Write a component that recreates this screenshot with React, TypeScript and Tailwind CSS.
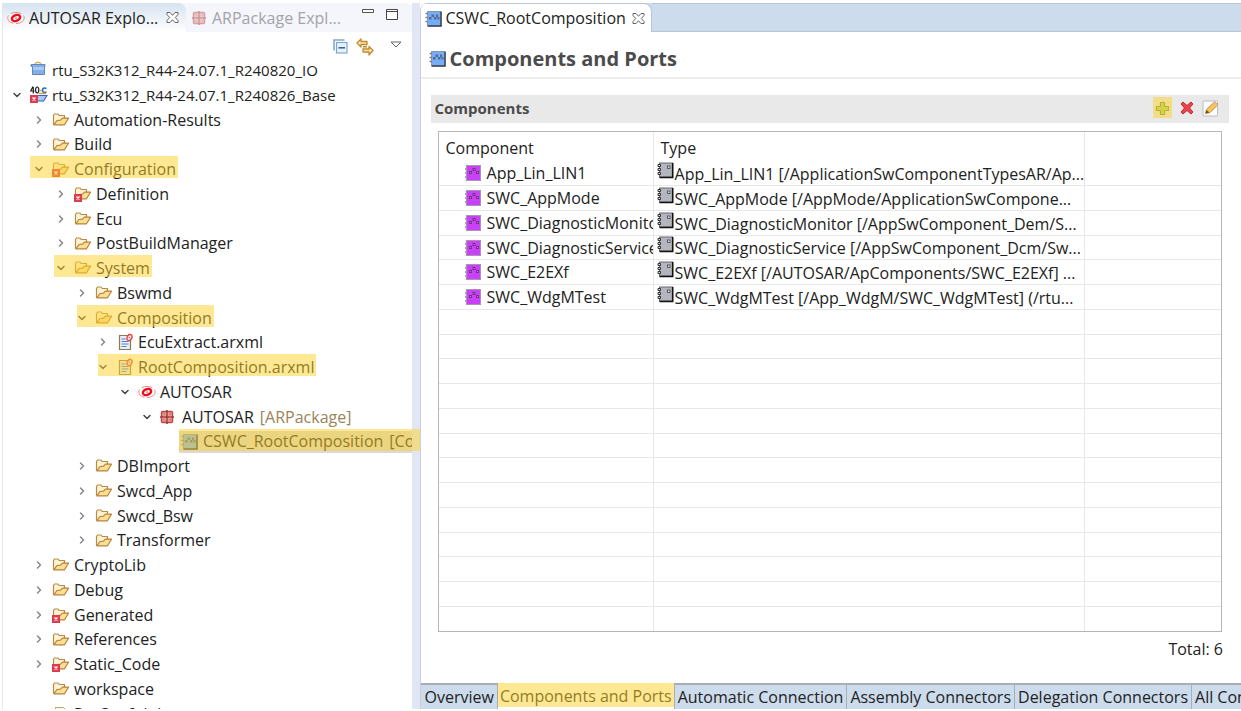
import { ChevronDown, ChevronRight } from 'lucide-react';
import clsx from 'clsx';

type IconName = 'folder' | 'folderError' | 'project' | 'projectError' | 'arxml' | 'autosar' | 'package' | 'composition' | 'file';

interface TreeNode {
  label: string;
  note?: string;
  level: number;
  icon: IconName;
  state: 'open' | 'closed' | 'leaf';
  marker?: string;
  selected?: boolean;
}

interface ComponentRow {
  name: string;
  type: string;
}

const INDENT = ['pl-[5px]', 'pl-[27px]', 'pl-[49px]', 'pl-[70px]', 'pl-[91px]', 'pl-[113px]', 'pl-[135px]', 'pl-[156px]'];

const TREE: TreeNode[] = [
  { label: 'rtu_S32K312_R44-24.07.1_R240820_IO', level: 0, icon: 'project', state: 'leaf' },
  { label: 'rtu_S32K312_R44-24.07.1_R240826_Base', level: 0, icon: 'projectError', state: 'open' },
  { label: 'Automation-Results', level: 1, icon: 'folder', state: 'closed' },
  { label: 'Build', level: 1, icon: 'folder', state: 'closed' },
  { label: 'Configuration', level: 1, icon: 'folderError', state: 'open', marker: 'left-0 -right-0.5' },
  { label: 'Definition', level: 2, icon: 'folderError', state: 'closed' },
  { label: 'Ecu', level: 2, icon: 'folder', state: 'closed' },
  { label: 'PostBuildManager', level: 2, icon: 'folder', state: 'closed' },
  { label: 'System', level: 2, icon: 'folder', state: 'open', marker: 'left-0.5 -right-0.5' },
  { label: 'Bswmd', level: 3, icon: 'folder', state: 'closed' },
  { label: 'Composition', level: 3, icon: 'folder', state: 'open', marker: 'left-1 -right-0.5' },
  { label: 'EcuExtract.arxml', level: 4, icon: 'arxml', state: 'closed' },
  { label: 'RootComposition.arxml', level: 4, icon: 'arxml', state: 'open', marker: 'left-1 -right-0.5' },
  { label: 'AUTOSAR', level: 5, icon: 'autosar', state: 'open' },
  { label: 'AUTOSAR', note: '[ARPackage]', level: 6, icon: 'package', state: 'open' },
  { label: 'CSWC_RootComposition', note: '[CompositionSwComponentType]', level: 7, icon: 'composition', state: 'leaf', selected: true, marker: 'left-5 right-0' },
  { label: 'DBImport', level: 3, icon: 'folder', state: 'closed' },
  { label: 'Swcd_App', level: 3, icon: 'folder', state: 'closed' },
  { label: 'Swcd_Bsw', level: 3, icon: 'folder', state: 'closed' },
  { label: 'Transformer', level: 3, icon: 'folder', state: 'closed' },
  { label: 'CryptoLib', level: 1, icon: 'folder', state: 'closed' },
  { label: 'Debug', level: 1, icon: 'folder', state: 'closed' },
  { label: 'Generated', level: 1, icon: 'folderError', state: 'closed' },
  { label: 'References', level: 1, icon: 'folder', state: 'closed' },
  { label: 'Static_Code', level: 1, icon: 'folderError', state: 'closed' },
  { label: 'workspace', level: 1, icon: 'folder', state: 'leaf' },
  { label: 'RteConf.dpl', level: 1, icon: 'file', state: 'leaf' },
];

const COMPONENTS: ComponentRow[] = [
  { name: 'App_Lin_LIN1', type: 'App_Lin_LIN1 [/ApplicationSwComponentTypesAR/Ap...' },
  { name: 'SWC_AppMode', type: 'SWC_AppMode [/AppMode/ApplicationSwCompone...' },
  { name: 'SWC_DiagnosticMonitor', type: 'SWC_DiagnosticMonitor [/AppSwComponent_Dem/S...' },
  { name: 'SWC_DiagnosticService', type: 'SWC_DiagnosticService [/AppSwComponent_Dcm/Sw...' },
  { name: 'SWC_E2EXf', type: 'SWC_E2EXf [/AUTOSAR/ApComponents/SWC_E2EXf] ...' },
  { name: 'SWC_WdgMTest', type: 'SWC_WdgMTest [/App_WdgM/SWC_WdgMTest] (/rtu...' },
];

const EMPTY_ROWS = 13;

const PAGES = [
  'Overview',
  'Components and Ports',
  'Automatic Connection',
  'Assembly Connectors',
  'Delegation Connectors',
  'All Connectors',
];

function ErrorBadge() {
  return (
    <g>
      <rect x="0" y="9" width="8" height="8" fill="#dc3c50" />
      <path d="M2.5 11.5l3 3M5.5 11.5l-3 3" stroke="#fff" strokeWidth="1.3" />
    </g>
  );
}

function FolderIcon({ error = false }: { error?: boolean }) {
  return (
    <svg viewBox="0 0 17 17" className="w-[17px] h-[17px]">
      <path d="M1.5 13.5V4.5l1-1.5h3.5l1.2 1.5h5.3v3" fill="#fdf3d3" stroke="#b98a45" strokeWidth="1.2" strokeLinejoin="round" />
      <path d="M1.8 13.8L5 9.5l3.5-.3 2-2h6L12.5 13.8z" fill="#fbdf92" stroke="#b9803a" strokeWidth="1.2" strokeLinejoin="round" />
      {error && <ErrorBadge />}
    </svg>
  );
}

function ProjectIcon() {
  return (
    <svg viewBox="0 0 17 17" className="w-[17px] h-[17px]">
      <path d="M4 4.5Q5 1 8 1t4 3.5" fill="#f5e7bb" stroke="#b9a268" />
      <path d="M1 3.5h14v2h-.5v8h-12v-8H1z" fill="#86aee6" stroke="#5f86bd" />
      <path d="M3 6h11v3H3z" fill="#abc9f2" />
    </svg>
  );
}

function ProjectErrorIcon() {
  return (
    <svg viewBox="0 0 18 18" className="w-[18px] h-[18px]">
      <path d="M3 .5L.7 5h3.8M3.3 1v6.5" fill="none" stroke="#222" strokeWidth="1.2" />
      <ellipse cx="7.2" cy="4" rx="1.6" ry="3" fill="none" stroke="#222" strokeWidth="1.2" />
      <path d="M16.5 2.5Q12.5 1 12.5 4.2T16.5 6" fill="none" stroke="#2b6cb0" strokeWidth="1.6" />
      <path d="M9.5 4.5h2M9 7.5h7" stroke="#d9a440" strokeWidth="1.3" />
      <path d="M4 9.5h13l-3.5 5.5H5z" fill="#a9c8f5" stroke="#3e63bd" strokeWidth="1.2" />
      <ErrorBadge />
    </svg>
  );
}

function AutosarIcon() {
  return (
    <svg viewBox="0 0 18 14" className="w-[18px] h-[14px]">
      <ellipse cx="9" cy="7" rx="8.2" ry="5.6" fill="#fff" stroke="#f07c80" strokeWidth=".9" strokeDasharray="11 2.5" />
      <ellipse cx="9" cy="7" rx="4.3" ry="2.8" fill="#fff" stroke="#e8101c" strokeWidth="2.4" transform="rotate(-22 9 7)" />
      <ellipse cx="9" cy="7" rx="1" ry=".6" fill="#e8101c" />
    </svg>
  );
}

function PackageIcon() {
  return (
    <svg viewBox="0 0 14 14" className="w-[14px] h-[14px]">
      <rect x="1.5" y="1.5" width="11" height="11" rx="1" fill="#e9aaa2" stroke="#bd4a48" strokeWidth="1.5" />
      <path d="M7 0v14M0 7h14" stroke="#a83a3a" strokeWidth="1.6" />
      <path d="M4 2v10M10 2v10M2 4h10M2 10h10" stroke="#cf7069" strokeWidth=".7" />
    </svg>
  );
}

function ArxmlIcon() {
  return (
    <svg viewBox="0 0 16 18" className="ml-0.5 w-4 h-[18px]">
      <path d="M1.5 2.5h11v14h-11z" fill="#e6eefb" stroke="#8f7a4c" strokeWidth="1.2" />
      <path d="M3.5 6h4M3.5 8.5h7M3.5 11h7M3.5 13.5h5" stroke="#5a7fc4" strokeWidth="1.2" />
      <ellipse cx="11.500" cy="4.5" rx="2.3" ry="3.2" fill="#fff" stroke="#f04048" strokeWidth="1.5" transform="rotate(25 11.5 4.5)" />
      <circle cx="11.5" cy="4.5" r=".8" fill="#f04048" />
    </svg>
  );
}

function FileIcon() {
  return (
    <svg viewBox="0 0 14 16" className="ml-0.5 w-[14px] h-4">
      <path d="M1.5 1.500h8l3 3v10h-11z" fill="#fbf8e4" stroke="#b5a468" />
      <path d="M4 6h5M4 9h6" stroke="#6a92c8" />
    </svg>
  );
}

function CompositionIcon() {
  return (
    <svg viewBox="0 0 17 17" className="w-[17px] h-[17px]">
      <path d="M2.5 1.5h13v14h-13z" fill="#74aefa" />
      <path d="M2.5 15.5v-14h13" fill="none" stroke="#8795a8" />
      <path d="M16 1.5V16H2.5" fill="none" stroke="#2a3140" strokeWidth="1.5" />
      <path d="M.5 3.500h2M.5 7.500h2M.5 11.500h2" stroke="#777d86" strokeWidth="1.500" />
      <path d="M4 7h2.500v2.500H4zM6.500 4.500H9V7H6.500zM9 7h2.500v2.500H9zM11 4.500h2V7h-2zM12.500 7h2v2.500h-2z" fill="#566a88" />
    </svg>
  );
}

function PrototypeIcon() {
  return (
    <svg viewBox="0 0 16 16" className="w-4 h-4 shrink-0">
      <rect x="1.5" y=".5" width="14" height="15" fill="#c840f8" stroke="#a894b0" />
      <path d="M0 3h2v2H0zM0 7h2v2H0zM0 11h2v2H0z" fill="#a79ab0" />
      <path d="M4 6h3v3H4zM7.500 3h3v3h-3zM11 6h3v3h-3z" fill="#75308a" />
      <path d="M5 7h1v1H5zM8.500 4h1v1h-1zM12 7h1v1h-1z" fill="#c87fe0" />
    </svg>
  );
}

function ComponentTypeIcon() {
  return (
    <svg viewBox="0 0 17 17" className="w-[17px] h-[17px] shrink-0">
      <rect x="2.5" y="1" width="13" height="14" fill="#b3b5bf" stroke="#6a6a72" />
      <path d="M15.7 1v14.5H2.5" fill="none" stroke="#111" strokeWidth="1.6" />
      <path d="M1 2.500h2.500v2H1zM1 6.500h2.500v2H1zM1 10.500h2.500v2H1z" fill="#ddd" stroke="#222" strokeWidth=".9" />
      <rect x="10.5" y="4" width="2.5" height="2.5" fill="#ddd" stroke="#555" strokeWidth=".9" />
    </svg>
  );
}

function CloseIcon() {
  return (
    <svg viewBox="0 0 13 13" className="w-[13px] h-[13px]">
      <path d="M1 1.5h3l2.500 2.800L9 1.500h3v2L9.300 6.500l2.700 3v2H9L6.500 8.700 4 11.500H1v-2l2.700-3L1 3.500z" fill="#fff" stroke="#555" strokeWidth=".9" />
    </svg>
  );
}

function NodeIcon({ name }: { name: IconName }) {
  switch (name) {
    case 'folder': return <FolderIcon />;
    case 'folderError': return <FolderIcon error />;
    case 'project': return <ProjectIcon />;
    case 'projectError': return <ProjectErrorIcon />;
    case 'arxml': return <ArxmlIcon />;
    case 'autosar': return <AutosarIcon />;
    case 'package': return <PackageIcon />;
    case 'composition': return <CompositionIcon />;
    default: return <FileIcon />;
  }
}

function TreeItem({ node }: { node: TreeNode }) {
  return (
    <li
      role="treeitem"
      aria-level={node.level + 1}
      aria-selected={!!node.selected}
      aria-expanded={node.state === 'leaf' ? undefined : node.state === 'open'}
      className={clsx('flex h-[25px] nth-[4n]:h-6', INDENT[node.level], node.level === 0 && 'text-[15px]')}
    >
      <div className={clsx('relative flex items-center whitespace-nowrap', node.selected && 'flex-1 min-w-0')}>
        {node.selected && <div className="absolute left-5 right-2 top-0.5 bottom-0 bg-[#d9d9d9]" />}
        <div className="relative w-[22px] flex shrink-0 pl-[3px]">
          {node.state !== 'leaf' && (
            <button aria-label={`Toggle ${node.label}`} className="text-[#444]">
              {node.state === 'open'
                ? <ChevronDown className="w-3 h-3" strokeWidth={3} />
                : <ChevronRight className="w-3 h-3 text-[#888]" strokeWidth={3} />}
            </button>
          )}
        </div>
        <span className="relative w-[22px] shrink-0 flex">
          <NodeIcon name={node.icon} />
        </span>
        <span className={clsx('relative', node.selected && 'flex-1 min-w-0 overflow-hidden mr-2')}>
          {node.label}
          {node.note && <span className={clsx('ml-1.5', !node.selected && 'text-[#9a8458]')}>{node.note}</span>}
        </span>
        {node.marker && <div className={clsx('absolute top-0 h-[22px] bg-[#ffd22a]/50', node.marker)} />}
      </div>
    </li>
  );
}

function Explorer() {
  return (
    <aside className="w-[33%] shrink-0 flex flex-col border-l border-[#e4e6ee] ml-0.5">
      {/* View tabs */}
      <div className="flex h-[29px] bg-[#f4f6fc] rounded-t-md" role="tablist">
        <div className="flex items-center w-[183px] pl-1 gap-1 rounded-tr-lg bg-linear-to-b from-[#d6e3ef] to-white">
          <AutosarIcon />
          <button role="tab" aria-selected="true" className="whitespace-nowrap">AUTOSAR Explo...</button>
          <button aria-label="Close" className="ml-1"><CloseIcon /></button>
        </div>
        <button role="tab" aria-selected="false" className="flex items-center gap-1.5 pl-1.5 text-[#a3a3a8] whitespace-nowrap">
          <span className="opacity-50"><PackageIcon /></span>
          ARPackage Expl...
        </button>
        <div className="ml-auto flex items-start gap-3 pt-1.5 pr-3.5">
          <button aria-label="Minimize">
            <svg viewBox="0 0 12 12" className="w-3 h-3"><path d="M.5 .5h11v3H.5z" fill="#fff" stroke="#555" /></svg>
          </button>
          <button aria-label="Maximize">
            <svg viewBox="0 0 12 12" className="w-3 h-3"><path d="M.5 .5h11v10H.5zM.5 2.500h11" fill="#fff" stroke="#444" /></svg>
          </button>
        </div>
      </div>

      {/* View toolbar */}
      <div className="flex justify-end items-center gap-2 h-[25px] pt-1 pr-2.5">
        <button aria-label="Collapse All">
          <svg viewBox="0 0 15 15" className="w-[15px] h-[15px]">
            <path d="M1 11.500V1h10.500" fill="none" stroke="#83a9cc" strokeWidth="1.600" />
            <rect x="3.500" y="3.500" width="10.500" height="10.500" fill="#e6f3fd" stroke="#7fa8cc" strokeWidth="1.200" />
            <path d="M5.500 8.800h6.500" stroke="#286090" strokeWidth="1.500" />
          </svg>
        </button>
        <button aria-label="Link with Editor">
          <svg viewBox="0 0 18 18" className="w-[18px] h-[18px]">
            <path d="M1 5l4-4v2.500h6v3H5V9z" fill="#fbe6b0" stroke="#c28a28" strokeWidth="1.300" strokeLinejoin="round" />
            <path d="M17 12.500l-4-4V11H7v3h6v3z" fill="#fbe6b0" stroke="#c28a28" strokeWidth="1.300" strokeLinejoin="round" />
            <path d="M7 8.800h4" stroke="#c28a28" strokeWidth="1.500" />
          </svg>
        </button>
        <button aria-label="View Menu" className="ml-2 mb-1">
          <svg viewBox="0 0 12 7" className="w-3 h-[7px]"><path d="M1 1h10L6 6z" fill="#fff" stroke="#666" /></svg>
        </button>
      </div>

      {/* The list runs on over the sash so that markers can cross it */}
      <ul role="tree" aria-label="AUTOSAR Explorer" className="relative z-10 -mr-2 flex-1 min-h-0 overflow-hidden">
        {TREE.map((node, i) => <TreeItem key={i} node={node} />)}
      </ul>
    </aside>
  );
}

function ComponentsTable() {
  const cell = 'border-r border-[#e8e8e8] overflow-hidden whitespace-nowrap p-0';

  return (
    <div className="flex-1 min-h-0 mx-[7px] mt-2 border border-[#b4b6bd] overflow-hidden">
      <table className="w-full table-fixed border-separate border-spacing-0">
        <colgroup>
          <col className="w-[215px]" />
          <col className="w-[431px]" />
          <col />
        </colgroup>
        <thead>
          <tr className="h-[29px] text-left">
            <th className={clsx(cell, 'font-normal pl-[7px] pt-0.5')}>Component</th>
            <th className={clsx(cell, 'font-normal pl-[7px] pt-0.5')}>Type</th>
            <th className="p-0" aria-label="Spacer" />
          </tr>
        </thead>
        <tbody>
          {COMPONENTS.map((row) => (
            <tr key={row.name} className="h-[25px] nth-[4n]:h-6 *:border-b">
              <td className={cell}>
                <div className="flex items-center gap-1.5 h-[23px] pl-[26px]">
                  <PrototypeIcon />
                  {row.name}
                </div>
              </td>
              <td className={cell}>
                <div className="flex items-start h-[23px] pl-[3px]">
                  <ComponentTypeIcon />
                  <span className="ml-px pt-0.5">{row.type}</span>
                </div>
              </td>
              <td className="border-[#e8e8e8] p-0" />
            </tr>
          ))}
          {Array.from({ length: EMPTY_ROWS }, (_, i) => (
            <tr key={i} className="h-[25px] nth-[4n]:h-6 *:border-b">
              <td className={cell} />
              <td className={cell} />
              <td className="border-[#e8e8e8] p-0" />
            </tr>
          ))}
        </tbody>
      </table>
    </div>
  );
}

function Editor() {
  return (
    <main className="flex-1 min-w-0 flex flex-col border-l border-[#c9cfdd] rounded-tl-lg overflow-hidden bg-white">
      {/* Editor tabs */}
      <div className="flex h-[29px] bg-[#cddcec]">
        <div className="flex items-center w-[231px] pl-1 gap-1 bg-white rounded-tr-lg border-r border-t border-[#b9c5d6]">
          <CompositionIcon />
          <button className="whitespace-nowrap">CSWC_RootComposition</button>
          <button aria-label="Close" className="ml-0.5"><CloseIcon /></button>
        </div>
        <div className="flex-1 border-b border-t border-[#b9c5d6]" />
      </div>

      <header className="flex items-center gap-1 h-[47px] pl-2 pt-2 mb-4 border-b-2 border-[#ededed]">
        <CompositionIcon />
        <h1 className="text-xl font-bold text-[#4b4b4b]">Components and Ports</h1>
      </header>

      <section className="flex-1 min-h-0 flex flex-col pl-2.5 pr-3">
        <div className="flex items-center h-7 pl-1 pr-2.5 pb-0.5 bg-[#e9e9e9]">
          <h2 className="font-bold text-[15px] text-[#4b4b4b]">Components</h2>
          <div className="ml-auto flex items-center gap-2">
            <button aria-label="Add" className="relative p-0.5">
              <svg viewBox="0 0 15 15" className="w-[15px] h-[15px]">
                <path d="M5.500 1.500h4v4h4v4h-4v4h-4v-4h-4v-4h4z" fill="#a9d46c" stroke="#6d9a3c" strokeWidth="1.200" strokeLinejoin="round" />
              </svg>
              <span className="absolute inset-0 -top-0.5 bg-[#ffd22a]/50" />
            </button>
            <button aria-label="Remove">
              <svg viewBox="0 0 14 14" className="w-[14px] h-[14px]">
                <path d="M3 1l4 3.500L11 1l2 2-3.500 4L13 11l-2 2-4-3.500L3 13l-2-2 3.500-4L1 3z" fill="#ea4350" stroke="#bd2a35" strokeLinejoin="round" />
              </svg>
            </button>
            <button aria-label="Edit">
              <svg viewBox="0 0 17 17" className="w-[17px] h-[17px]">
                <rect x="1" y="1" width="14.500" height="15" rx="1" fill="#fdfdfd" stroke="#bcbcbc" />
                <path d="M3.500 13.500l1-4L12.500 2l3.500 2.500-8 8z" fill="#f7c65c" stroke="#c48a35" />
                <path d="M3.500 13.500l1-3.500 3 2.500z" fill="#6b5138" />
                <path d="M12.500 2l3.500 2.500-1.500 1.500-3.500-2.500z" fill="#efb68a" />
              </svg>
            </button>
          </div>
        </div>

        <ComponentsTable />
        <p className="h-[51px] pt-[7px] pr-1.5 text-right">Total: 6</p>
      </section>

      {/* Page tabs */}
      <nav className="flex h-[26px] bg-[#cddcec] overflow-hidden" role="tablist">
        {PAGES.map((page) => {
          const active = page === 'Components and Ports';
          return (
            <button
              key={page}
              role="tab"
              aria-selected={active}
              className={clsx(
                'relative shrink-0 whitespace-nowrap border-r border-[#a9adb5]',
                active ? 'bg-white px-0.5' : 'border-t-2 px-[3px]',
                page === 'Overview' && 'pl-1',
              )}
            >
              {page}
              {active && <span className="absolute inset-x-0 top-0 bottom-0.5 bg-[#ffd22a]/50" />}
            </button>
          );
        })}
      </nav>
    </main>
  );
}

export default function App() {
  return (
    <div className="h-screen flex overflow-hidden bg-white pt-[3px] pb-0.5 text-base leading-5 text-[#222] font-['Open_Sans','Noto_Sans',sans-serif]">
      <Explorer />
      <div className="w-2 shrink-0 bg-[#e1e6f5]" />
      <Editor />
    </div>
  );
}
